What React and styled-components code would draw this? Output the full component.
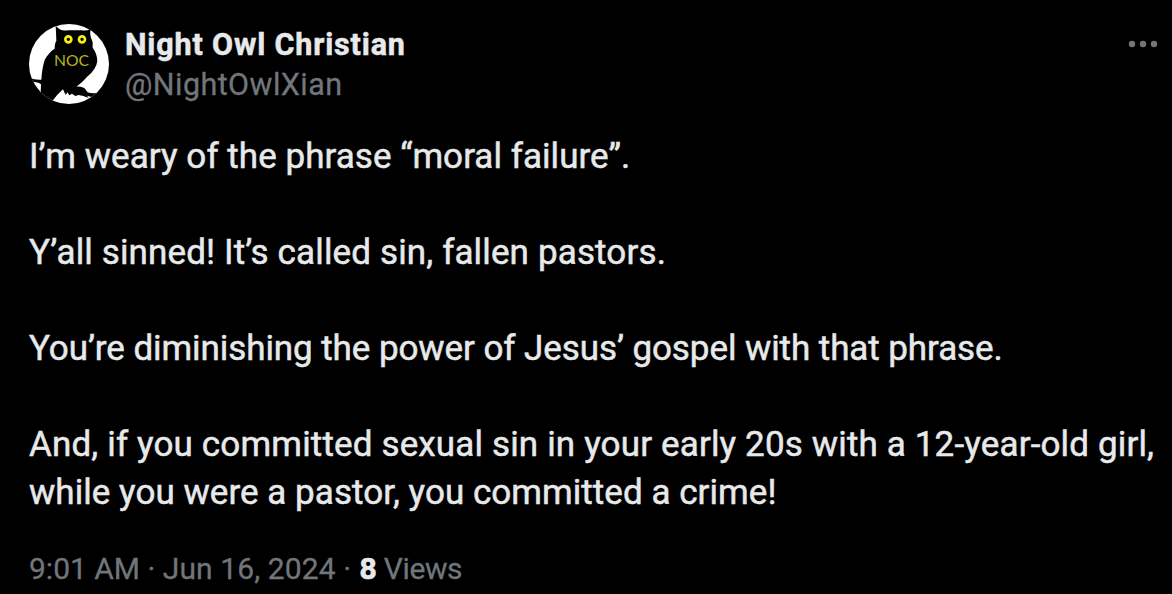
import React from "react";
import styled, { createGlobalStyle } from "styled-components";

const GlobalStyle = createGlobalStyle`
  body { margin: 0; background: #000; }
`;
const Post = styled.article`
  box-sizing: border-box; width: 1172px; height: 594px; overflow: hidden;
  padding: 24px 14px 0 29px; background: #000; color: #e7e9ea;
  font-family: Roboto, "Liberation Sans", sans-serif;
`;
const Header = styled.header`display: flex; height: 80px;`;
const Avatar = styled.svg`width: 80px; height: 80px; border-radius: 50%; flex: none;`;
const Author = styled.div`
  display: flex; flex-direction: column; flex: 1;
  margin-left: 16px; padding-top: 1px;
`;
const Name = styled.span`
  font-size: 30.5px; line-height: 40px; font-weight: 700; white-space: nowrap;
  letter-spacing: 0.84px; -webkit-text-stroke: 0.5px currentColor;
`;
const Handle = styled.span`
  font-size: 30.5px; line-height: 40px; color: #71767b; white-space: nowrap;
  letter-spacing: 0.44px; -webkit-text-stroke: 0.3px currentColor;
`;
const More = styled.svg`width: 30px; height: 8px; margin-top: 16px;`;
const Body = styled.div`
  margin-top: 29px; font-size: 35px; line-height: 48px;
  -webkit-text-stroke: 0.5px currentColor;
`;
const Line = styled.p`
  margin: 0 0 ${(p) => (p.$gap ? 48 : 0)}px; white-space: nowrap;
  letter-spacing: ${(p) => p.$track || 0}px;
`;
const Meta = styled.footer`
  display: flex; margin-top: 32px; font-size: 30px; line-height: 40px;
  color: #71767b; white-space: pre; -webkit-text-stroke: 0.3px currentColor;
`;
const Stamp = styled.span`letter-spacing: ${(p) => p.$track || 0}px;`;
const Views = styled.strong`
  color: #e7e9ea; font-weight: 700; margin-left: 1px;
  -webkit-text-stroke: 0.7px currentColor;
`;

function OwlAvatar() {
  return (
    <Avatar viewBox="27 27 240 240" aria-label="Owl">
      <rect x="27" y="27" width="240" height="240" fill="#fff" />
      <path
        fill="#000"
        d="M107 33 L119 43 Q128 48 145 46 L185 46 Q200 48 212 42 Q209 55 212 65 L218 82 L218 98 Q231 115 232 138 Q229 162 203 184 Q188 202 169 215 Q180 214 193 219 L203 232 Q220 238 238 232 L236 238 L224 240 L214 246 L201 242 L206 249 L190 243 L176 240 L166 243 L156 236 L148 241 L142 232 L137 240 L129 223 Q112 238 99 256 L92 267 L50 245 L42 205 L62 233 L63 208 Q57 202 44 201 L27 199 L27 188 Q48 196 64 194 Q66 160 74 135 Q86 112 104 101 Q104 85 109 78 L108 51 Z"
      />
      <g fill="#000" stroke="#f2ee12" strokeWidth="8">
        <circle cx="145" cy="73" r="9" />
        <circle cx="186" cy="73" r="9" />
      </g>
      <text x="102" y="152" fill="#b9b61b" fontFamily="Lato, sans-serif" fontSize="44" textLength="105" lengthAdjust="spacingAndGlyphs">NOC</text>
    </Avatar>
  );
}

export default function App() {
  return (
    <>
      <GlobalStyle />
      <Post>
        <Header>
          <OwlAvatar />
          <Author>
            <Name>Night Owl Christian</Name>
            <Handle>@NightOwlXian</Handle>
          </Author>
          <More viewBox="0 0 30 8" fill="#71767b">
            <circle cx="4" cy="4" r="3.2" />
            <circle cx="15" cy="4" r="3.2" />
            <circle cx="26" cy="4" r="3.2" />
          </More>
        </Header>
        <Body>
          <Line $gap $track={0.05}>I’m weary of the phrase “moral failure”.</Line>
          <Line $gap $track={0.14}>Y’all sinned! It’s called sin, fallen pastors.</Line>
          <Line $gap $track={-0.08}>You’re diminishing the power of Jesus’ gospel with that phrase.</Line>
          <Line $track={0.15}>And, if you committed sexual sin in your early 20s with a 12-year-old girl,</Line>
          <Line $track={0.04}>while you were a pastor, you committed a crime!</Line>
        </Body>
        <Meta>
          <Stamp>9:01 AM · </Stamp>
          <Stamp $track={0.1}>Jun 16, 2024 · </Stamp>
          <Views>8</Views>
          <Stamp $track={-0.4}> Views</Stamp>
        </Meta>
      </Post>
    </>
  );
}
